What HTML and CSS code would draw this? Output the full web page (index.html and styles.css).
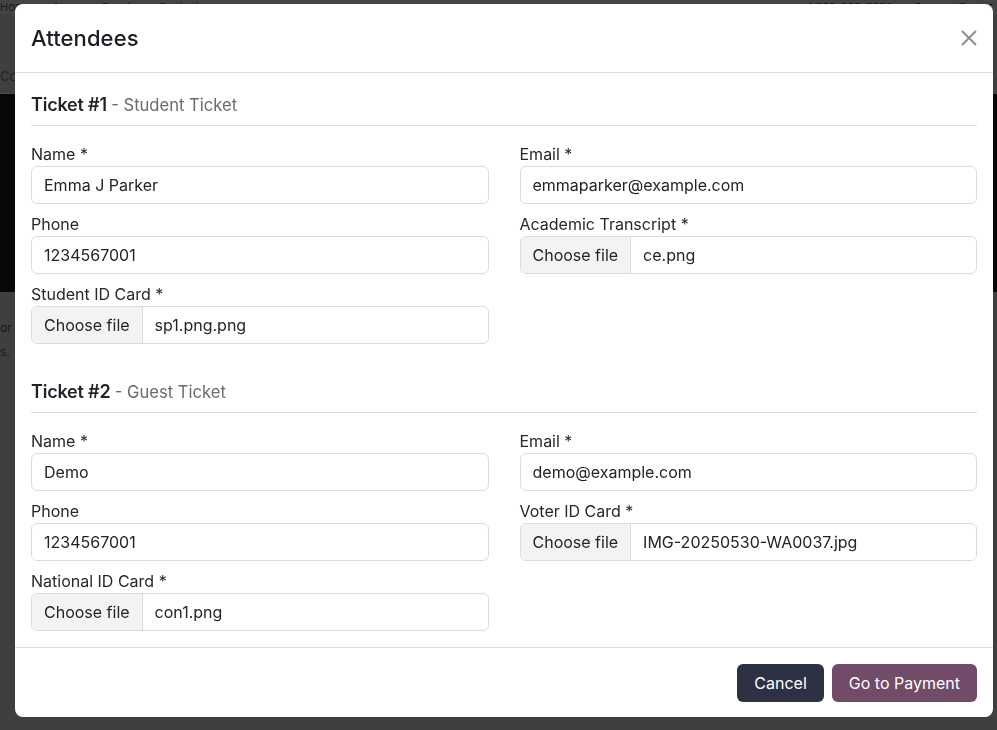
FILE: index.html
```html
<!DOCTYPE html>
<html lang="en">
<head>
<meta charset="utf-8">
<title>Attendees</title>
<link rel="stylesheet" href="styles.css">
</head>
<body>
<div class="page">
  <div class="topnav">
    <span>Home</span><span>Shop</span><span>Events</span><span>Contact us</span>
    <span class="spacer"></span>
    <span>+1 555-555-5556</span><span>Emma J Parker</span>
  </div>
  <div class="crumbs">Co</div>
  <div class="hero"></div>
  <div class="pagetext">or<br>s.</div>
</div>

<div class="modal" role="dialog">
  <div class="modal-header">
    <h4 class="modal-title">Attendees</h4>
    <button class="close" aria-label="Close">
      <svg width="16" height="16" viewBox="0 0 16 16"><path d="M1 1L15 15M15 1L1 15" stroke="#8a8a8a" stroke-width="1.8" fill="none"/></svg>
    </button>
  </div>
  <div class="modal-body">
    <section class="ticket">
      <h5 class="ticket-title">Ticket #1 <span class="ticket-type">- Student Ticket</span></h5>
      <div class="fields">
        <div class="field">
          <label>Name *</label>
          <div class="input">Emma J Parker</div>
        </div>
        <div class="field">
          <label>Email *</label>
          <div class="input">emmaparker@example.com</div>
        </div>
        <div class="field">
          <label>Phone</label>
          <div class="input">1234567001</div>
        </div>
        <div class="field">
          <label>Academic Transcript *</label>
          <div class="input file"><span class="file-btn">Choose file</span><span class="file-name">ce.png</span></div>
        </div>
        <div class="field">
          <label>Student ID Card *</label>
          <div class="input file"><span class="file-btn">Choose file</span><span class="file-name">sp1.png.png</span></div>
        </div>
      </div>
    </section>
    <section class="ticket">
      <h5 class="ticket-title">Ticket #2 <span class="ticket-type">- Guest Ticket</span></h5>
      <div class="fields">
        <div class="field">
          <label>Name *</label>
          <div class="input">Demo</div>
        </div>
        <div class="field">
          <label>Email *</label>
          <div class="input">demo@example.com</div>
        </div>
        <div class="field">
          <label>Phone</label>
          <div class="input">1234567001</div>
        </div>
        <div class="field">
          <label>Voter ID Card *</label>
          <div class="input file"><span class="file-btn">Choose file</span><span class="file-name">IMG-20250530-WA0037.jpg</span></div>
        </div>
        <div class="field">
          <label>National ID Card *</label>
          <div class="input file"><span class="file-btn">Choose file</span><span class="file-name">con1.png</span></div>
        </div>
      </div>
    </section>
  </div>
  <div class="modal-footer">
    <button class="btn btn-dark">Cancel</button>
    <button class="btn btn-primary">Go to Payment</button>
  </div>
</div>
</body>
</html>
```

FILE: styles.css
```css
* { box-sizing: border-box; }

html, body {
  margin: 0;
  height: 100%;
}

body {
  font-family: Inter, "Noto Sans", "Liberation Sans", sans-serif;
  color: #212529;
  background: #3f3f3f;
  overflow: hidden;
}

/* dimmed page behind the dialog */
.page {
  color: #1c1c1c;
  font-size: 16px;
}
.topnav {
  display: flex;
  gap: 22px;
  height: 14px;
  line-height: 14px;
  font-size: 11px;
  padding: 0 4px 0 0;
  overflow: hidden;
  background: #444;
}
.topnav .spacer { flex: 1; }
.crumbs {
  margin-top: 52px;
  height: 28px;
  line-height: 20px;
  font-size: 13px;
  color: #222;
  border-bottom: 1px solid #4a4a4a;
}
.hero {
  width: 100%;
  height: 198px;
  background: #080808;
}
.pagetext {
  margin-top: 24px;
  line-height: 24px;
  font-size: 12px;
  color: #1a1a1a;
}

/* dialog */
.modal {
  position: fixed;
  top: 4px;
  left: 15px;
  width: 978px;
  background: #fff;
  border-radius: 8px;
  overflow: hidden;
}

.modal-header {
  height: 69px;
  padding: 0 16px;
  display: flex;
  align-items: center;
  justify-content: space-between;
  border-bottom: 1px solid #dedede;
}
.modal-title {
  margin: 0;
  font-size: 22px;
  font-weight: 500;
  line-height: 28px;
  letter-spacing: 0.1px;
  color: #1a1d21;
}
.close {
  border: 0;
  background: none;
  padding: 0;
  width: 16px;
  height: 16px;
  display: flex;
  cursor: pointer;
}

.modal-body {
  padding: 15px 16px 16px;
  display: flex;
  flex-direction: column;
  gap: 31px;
}

.ticket-title {
  margin: 0 0 16px;
  padding: 4px 0 7px;
  font-size: 18px;
  font-weight: 600;
  line-height: 26px;
  letter-spacing: -0.2px;
  color: #1f2328;
  border-bottom: 1px solid #dedede;
}
.ticket-type {
  font-size: 16.6px;
  font-weight: 400;
  letter-spacing: 0;
  color: #6b6b70;
}

.fields {
  display: grid;
  grid-template-columns: 1fr 1fr;
  column-gap: 31px;
  row-gap: 8px;
}
.field label {
  display: block;
  font-size: 16px;
  line-height: 24px;
  color: #26282c;
}
.input {
  height: 38px;
  border: 1px solid #dcdcdc;
  border-radius: 6px;
  padding: 0 12px;
  font-size: 16px;
  line-height: 36px;
  color: #212529;
  white-space: nowrap;
  overflow: hidden;
}
.input.file {
  padding: 0;
  display: flex;
}
.file-btn {
  padding: 0 12px;
  background: #f3f3f3;
  border-right: 1px solid #dcdcdc;
}
.file-name {
  padding: 0 12px;
}

.modal-footer {
  border-top: 1px solid #dedede;
  padding: 16px 16px 15px;
  display: flex;
  justify-content: flex-end;
  gap: 8px;
}
.btn {
  height: 38px;
  border: 0;
  border-radius: 6px;
  padding: 0 17px;
  font-family: inherit;
  font-size: 16px;
  color: #fff;
  cursor: pointer;
}
.btn-dark { background: #2d3142; }
.btn-primary { background: #714b67; }
```
